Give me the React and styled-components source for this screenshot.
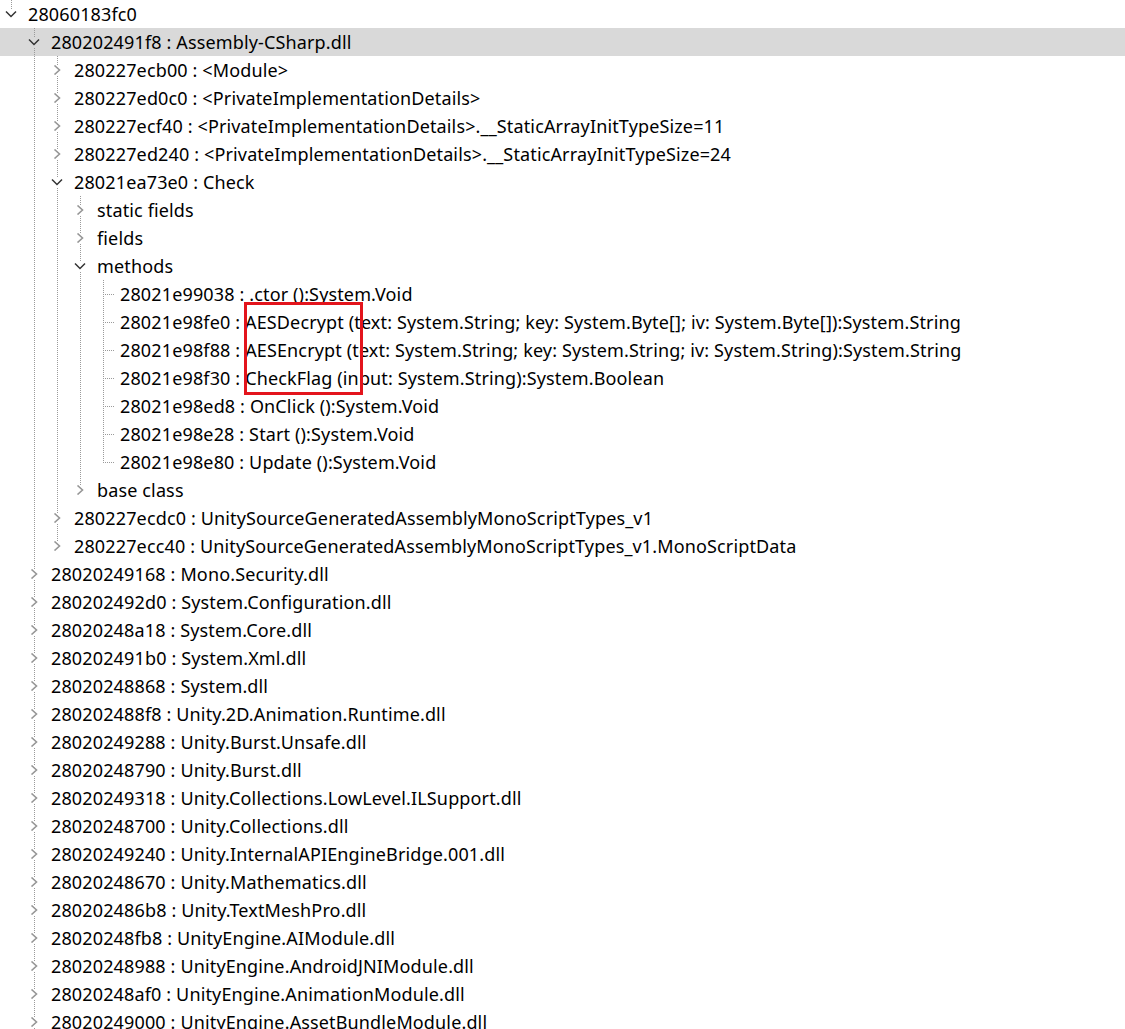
import styled, { createGlobalStyle } from "styled-components"

const Global = createGlobalStyle`
  html, body {
    margin: 0;
    padding: 0;
    background: #ffffff;
    overflow: hidden;
  }
  body {
    font-family: "Noto Sans", "Open Sans", "Liberation Sans", sans-serif;
  }
`

const LINE = "#9a9a9a"

const Tree = styled.div`
  position: relative;
  width: 1125px;
  height: 1029px;
  overflow: hidden;
`

const Row = styled.div`
  display: flex;
  align-items: stretch;
  height: 28px;
  background: ${(p) => (p.$selected ? "#d9d9d9" : "transparent")};
`

const Guide = styled.div`
  width: 23px;
  flex-shrink: 0;
  background-image: ${(p) => (p.$line ? `linear-gradient(to bottom, ${LINE} 50%, transparent 50%)` : "none")};
  background-size: 1px 2px;
  background-repeat: repeat-y;
  background-position: 11px 0;
`

const Own = styled.div`
  width: 23px;
  flex-shrink: 0;
  display: flex;
  flex-direction: column;
`

const Stub = styled.div`
  height: ${(p) => (p.$h ? `${p.$h}px` : "auto")};
  flex: ${(p) => (p.$h ? "none" : "1")};
  background-image: ${(p) => (p.$line ? `linear-gradient(to bottom, ${LINE} 50%, transparent 50%)` : "none")};
  background-size: 1px 2px;
  background-repeat: repeat-y;
  background-position: 11px ${(p) => p.$phase || 0}px;
`

const Branch = styled.div`
  height: 1px;
  margin-left: 11px;
  background-image: linear-gradient(to right, ${LINE} 50%, transparent 50%);
  background-size: 2px 1px;
  background-repeat: repeat-x;
`

const ChevronBox = styled.div`
  height: 10px;
  padding-left: 5px;
  svg {
    display: block;
  }
`

const Label = styled.span`
  padding-left: 5px;
  font-size: 18px;
  letter-spacing: 0.14px;
  line-height: 28px;
  color: #000;
  white-space: nowrap;
`

const Highlight = styled.div`
  position: absolute;
  left: 244px;
  top: 302px;
  width: 119px;
  height: 93px;
  box-sizing: border-box;
  border: 3px solid #e3141c;
  pointer-events: none;
`

function Chevron({ open }) {
  return (
    <svg width="12" height="10" viewBox="0 0 12 10">
      {open ? (
        <path d="M1 2.5 L6 7.5 L11 2.5" fill="none" stroke="#333333" strokeWidth="1.5" />
      ) : (
        <path d="M3.5 0.5 L8.5 5 L3.5 9.5" fill="none" stroke="#969696" strokeWidth="1.6" />
      )}
    </svg>
  )
}

const methods = [
  "28021e99038 : .ctor ():System.Void",
  "28021e98fe0 : AESDecrypt (text: System.String; key: System.Byte[]; iv: System.Byte[]):System.String",
  "28021e98f88 : AESEncrypt (text: System.String; key: System.String; iv: System.String):System.String",
  "28021e98f30 : CheckFlag (input: System.String):System.Boolean",
  "28021e98ed8 : OnClick ():System.Void",
  "28021e98e28 : Start ():System.Void",
  "28021e98e80 : Update ():System.Void",
].map((t) => ({ label: t, leaf: true }))

const dlls = [
  "28020249168 : Mono.Security.dll",
  "280202492d0 : System.Configuration.dll",
  "28020248a18 : System.Core.dll",
  "280202491b0 : System.Xml.dll",
  "28020248868 : System.dll",
  "280202488f8 : Unity.2D.Animation.Runtime.dll",
  "28020249288 : Unity.Burst.Unsafe.dll",
  "28020248790 : Unity.Burst.dll",
  "28020249318 : Unity.Collections.LowLevel.ILSupport.dll",
  "28020248700 : Unity.Collections.dll",
  "28020249240 : Unity.InternalAPIEngineBridge.001.dll",
  "28020248670 : Unity.Mathematics.dll",
  "280202486b8 : Unity.TextMeshPro.dll",
  "28020248fb8 : UnityEngine.AIModule.dll",
  "28020248988 : UnityEngine.AndroidJNIModule.dll",
  "28020248af0 : UnityEngine.AnimationModule.dll",
  "28020249000 : UnityEngine.AssetBundleModule.dll",
  "28020248e50 : UnityEngine.AudioModule.dll",
  "28020249360 : UnityEngine.CoreModule.dll",
].map((t) => ({ label: t }))

const tree = [
  {
    label: "28060183fc0",
    open: true,
    children: [
      {
        label: "280202491f8 : Assembly-CSharp.dll",
        open: true,
        selected: true,
        children: [
          { label: "280227ecb00 : <Module>" },
          { label: "280227ed0c0 : <PrivateImplementationDetails>" },
          { label: "280227ecf40 : <PrivateImplementationDetails>.__StaticArrayInitTypeSize=11" },
          { label: "280227ed240 : <PrivateImplementationDetails>.__StaticArrayInitTypeSize=24" },
          {
            label: "28021ea73e0 : Check",
            open: true,
            children: [
              { label: "static fields" },
              { label: "fields" },
              { label: "methods", open: true, children: methods },
              { label: "base class" },
            ],
          },
          { label: "280227ecdc0 : UnitySourceGeneratedAssemblyMonoScriptTypes_v1" },
          { label: "280227ecc40 : UnitySourceGeneratedAssemblyMonoScriptTypes_v1.MonoScriptData" },
        ],
      },
      ...dlls,
    ],
  },
]

function flatten(nodes, guides, out) {
  nodes.forEach((n, i) => {
    const hasNext = i < nodes.length - 1
    out.push({ ...n, guides, hasNext })
    if (n.open && n.children) flatten(n.children, [...guides, hasNext], out)
  })
  return out
}

const rows = flatten(tree, [], [])

export default function App() {
  return (
    <>
      <Global />
      <Tree>
        {rows.map((r, i) => (
          <Row key={i} $selected={r.selected}>
            {r.guides.map((g, j) => (
              <Guide key={j} $line={g} />
            ))}
            {r.leaf ? (
              <Own>
                <Stub $h={14} $line />
                <Branch />
                <Stub $line={r.hasNext} $phase={1} />
              </Own>
            ) : (
              <Own>
                <Stub $h={9} $line />
                <ChevronBox>
                  <Chevron open={r.open} />
                </ChevronBox>
                <Stub $line={r.hasNext} $phase={1} />
              </Own>
            )}
            <Label>{r.label}</Label>
          </Row>
        ))}
        <Highlight />
      </Tree>
    </>
  )
}
